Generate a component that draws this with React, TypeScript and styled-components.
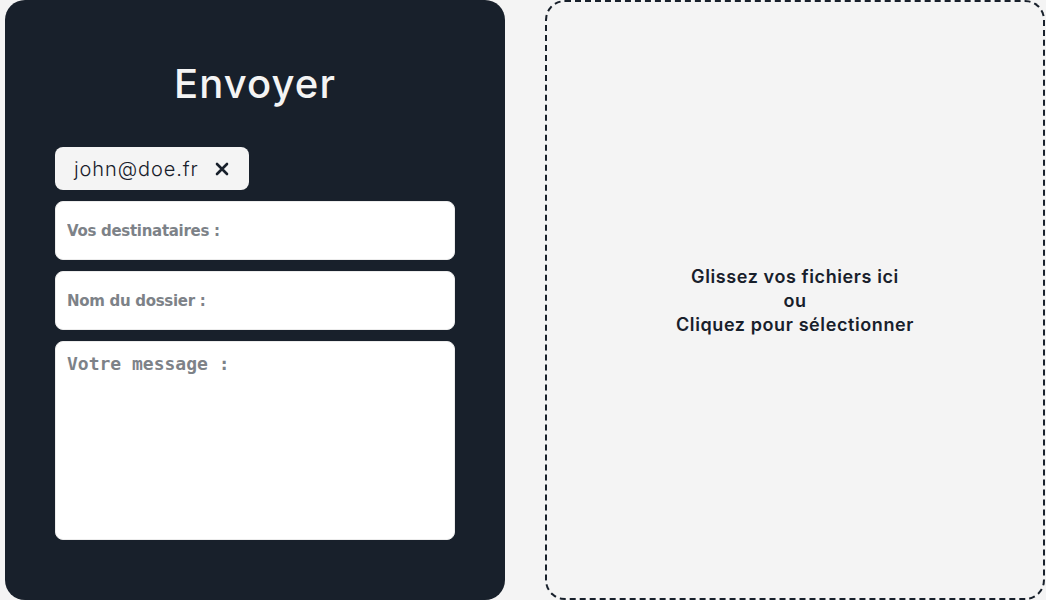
import React from "react";
import styled, { createGlobalStyle } from "styled-components";

const GlobalStyle = createGlobalStyle`
  html, body {
    margin: 0;
    padding: 0;
    background: #f4f4f4;
  }
  * {
    box-sizing: border-box;
  }
`;

const Page = styled.main`
  display: flex;
  gap: 40px;
  height: 600px;
  padding-left: 5px;
  font-family: Inter, "Noto Sans", sans-serif;
`;

const SendPanel = styled.section`
  width: 500px;
  height: 600px;
  background: #18202b;
  border-radius: 20px;
  padding: 58px 50px 0;
  display: flex;
  flex-direction: column;
`;

const Title = styled.h1`
  margin: 0 0 37px;
  color: #f4f4f4;
  font-size: 40px;
  line-height: 52px;
  font-weight: 500;
  text-align: center;
  letter-spacing: 1.1px;
`;

const Chips = styled.div`
  display: flex;
  flex-wrap: wrap;
  gap: 8px;
  margin-bottom: 11px;
`;

const Chip = styled.span`
  display: inline-flex;
  align-items: center;
  gap: 16px;
  height: 43px;
  padding: 0 20px 0 19px;
  background: #f4f4f4;
  border-radius: 8px;
  color: #18202b;
  font-size: 20px;
  font-weight: 300;
  letter-spacing: 0.9px;
`;

const RemoveButton = styled.button`
  border: none;
  background: none;
  padding: 0;
  display: flex;
  color: #18202b;
  cursor: pointer;
`;

const Form = styled.form`
  display: flex;
  flex-direction: column;
  gap: 11px;
`;

const TextInput = styled.input`
  height: 59px;
  width: 100%;
  border: 1px solid #ececec;
  border-radius: 8px;
  background: #fff;
  padding: 0 11px;
  font-family: "DejaVu Sans", sans-serif;
  font-size: 15px;
  font-weight: 700;
  color: #18202b;
  outline: none;
  &::placeholder {
    color: #7d8288;
    letter-spacing: -0.3px;
  }
`;

const MessageArea = styled.textarea`
  height: 199px;
  width: 100%;
  resize: none;
  border: 1px solid #ececec;
  border-radius: 8px;
  background: #fff;
  padding: 11px 11px;
  font-family: "DejaVu Sans Mono", monospace;
  font-size: 18px;
  font-weight: 700;
  color: #18202b;
  outline: none;
  &::placeholder {
    color: #7d8288;
  }
`;

const DropZone = styled.label`
  width: 500px;
  height: 600px;
  border: 2px dashed #18202b;
  border-radius: 20px;
  display: flex;
  align-items: center;
  justify-content: center;
  cursor: pointer;
`;

const DropText = styled.p`
  margin: 2px 0 0;
  text-align: center;
  color: #18202b;
  font-size: 18px;
  line-height: 24px;
  font-weight: 600;
  letter-spacing: 0.6px;
`;

function CloseIcon() {
  return (
    <svg width="14" height="14" viewBox="0 0 14 14" fill="none">
      <path
        d="M2 2L12 12M12 2L2 12"
        stroke="currentColor"
        strokeWidth="2.6"
        strokeLinecap="round"
      />
    </svg>
  );
}

export default function App() {
  const recipients = ["john@doe.fr"];
  return (
    <>
      <GlobalStyle />
      <Page>
        <SendPanel>
          <Title>Envoyer</Title>
          <Chips>
            {recipients.map((mail) => (
              <Chip key={mail}>
                {mail}
                <RemoveButton type="button" aria-label="Retirer">
                  <CloseIcon />
                </RemoveButton>
              </Chip>
            ))}
          </Chips>
          <Form>
            <TextInput placeholder="Vos destinataires :" />
            <TextInput placeholder="Nom du dossier :" />
            <MessageArea placeholder="Votre message :" />
          </Form>
        </SendPanel>
        <DropZone>
          <DropText>
            Glissez vos fichiers ici
            <br />
            ou
            <br />
            Cliquez pour sélectionner
          </DropText>
          <input type="file" hidden multiple />
        </DropZone>
      </Page>
    </>
  );
}
